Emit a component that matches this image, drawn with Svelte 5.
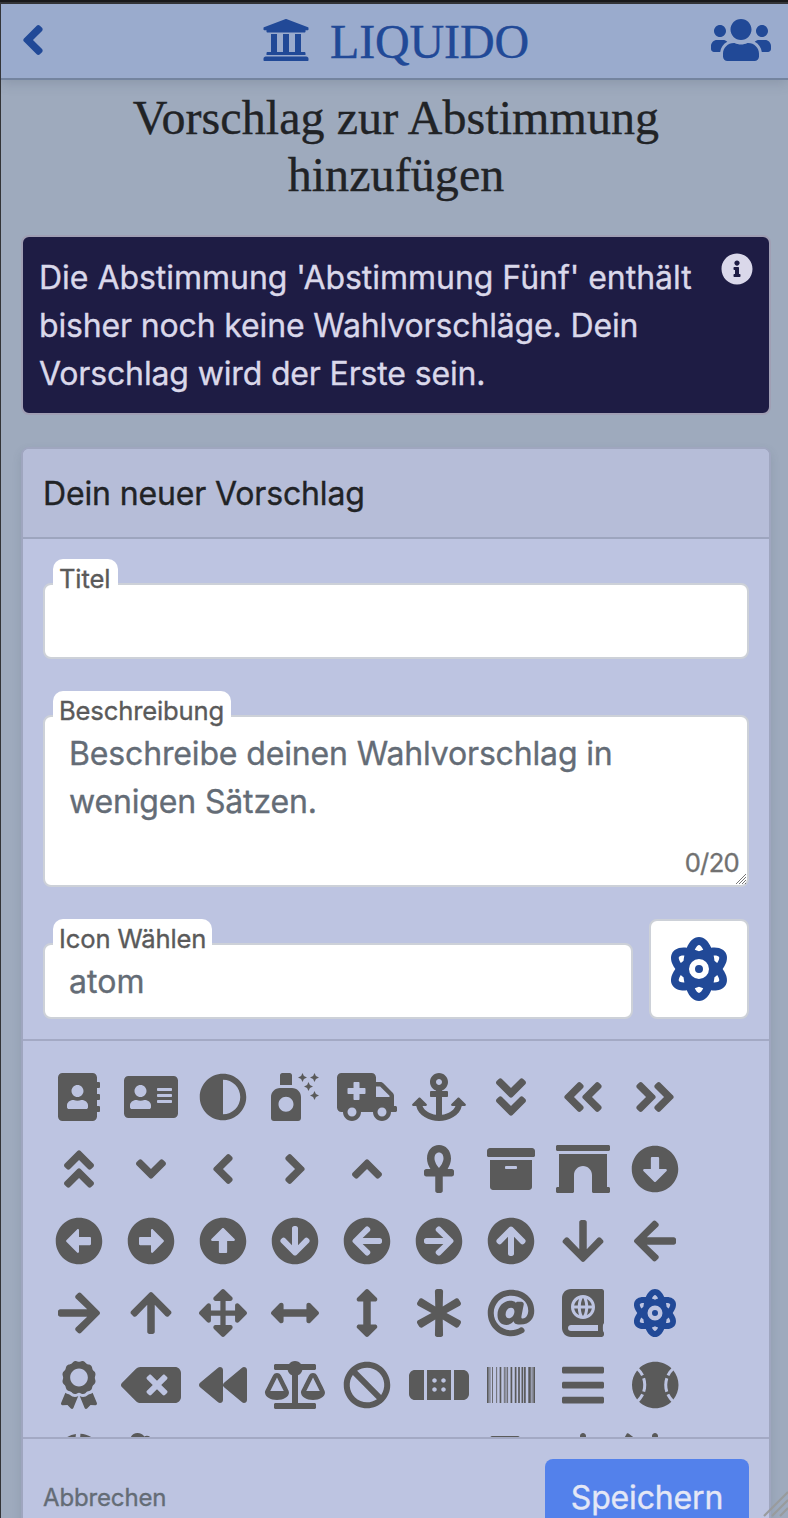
<script>
  const circle = 'M504 256c0 137-111 248-248 248S8 393 8 256 119 8 256 8s248 111 248 248z';
  const angle = 'M143 352.3L7 216.3c-9.4-9.4-9.4-24.6 0-33.9l22.6-22.6c9.4-9.4 24.6-9.4 33.9 0l96.4 96.4 96.4-96.4c9.4-9.4 24.6-9.4 33.9 0l22.6 22.6c9.4 9.4 9.4 24.6 0 33.9l-136 136c-9.2 9.4-24.4 9.4-33.8 0z';
  const doubleAngle =
    angle.replace('M143 352.3L7 216.3', 'M143 256.3L7 120.3') +
    angle.replace('M143 352.3L7 216.3', 'M143 448.3L7 312.3');
  const blockArrow = circle + 'M212 140v116h-70.9c-10.7 0-16.1 13-8.5 20.5l114.9 114.3c4.7 4.7 12.2 4.7 16.9 0l114.9-114.3c7.6-7.6 2.2-20.5-8.5-20.5H300V140c0-6.6-5.4-12-12-12h-64c-6.6 0-12 5.4-12 12z';
  const circleArrow = circle + 'm-143.6-28.9L288 302.6V120c0-13.3-10.7-24-24-24h-16c-13.3 0-24 10.7-24 24v182.6l-72.4-75.5c-9.3-9.7-24.8-9.9-34.3-.4l-10.9 11c-9.4 9.4-9.4 24.6 0 33.9L239 404.3c9.4 9.4 24.6 9.4 33.9 0l132.7-132.7c9.4-9.4 9.4-24.6 0-33.9l-10.9-11c-9.5-9.5-25-9.3-34.3.4z';
  const arrow = 'M413.1 222.5l22.2 22.2c9.4 9.4 9.4 24.6 0 33.9L241 473c-9.4 9.4-24.6 9.4-33.9 0L12.7 278.6c-9.4-9.4-9.4-24.6 0-33.9l22.2-22.2c9.5-9.5 25-9.3 34.3.4L184 343.4V56c0-13.3 10.7-24 24-24h32c13.3 0 24 10.7 24 24v287.4l114.8-120.5c9.3-9.8 24.8-10 34.3-.4z';
  const arrowsH = 'M377.941 169.941V216H134.059v-46.059c0-21.382-25.851-32.09-40.971-16.971L7.029 239.029c-9.373 9.373-9.373 24.568 0 33.941l86.059 86.059c15.119 15.119 40.971 4.411 40.971-16.971V296h243.882v46.059c0 21.382 25.851 32.09 40.971 16.971l86.059-86.059c9.373-9.373 9.373-24.568 0-33.941l-86.059-86.059c-15.119-15.12-40.971-4.412-40.971 16.97z';
  const atom = 'M223.999 224a32 32 0 1 0 32.008 32A32.064 32.064 0 0 0 223.999 224Zm214.172-96c-10.877-19.5-40.51-50.75-116.275-41.875C300.392 34.875 267.634 0 223.999 0s-76.39 34.875-97.896 86.125C50.337 77.375 20.706 108.5 9.829 128-6.55 157.375-5.175 201.125 34.958 256-5.175 310.875-6.55 354.625 9.829 384c29.131 52.375 101.647 43.625 116.274 41.875C147.608 477.125 180.364 512 223.999 512s76.393-34.875 97.897-86.125c14.629 1.75 87.144 10.5 116.275-41.875C454.55 354.625 453.175 310.875 413.04 256 453.175 201.125 454.55 157.375 438.171 128ZM63.339 352c-4-7.25-.125-24.75 15.004-48.25 6.877 6.5 14.129 12.875 21.881 19.125 1.625 13.75 4 27.125 6.75 40.125C82.345 363.875 67.091 358.625 63.339 352Zm36.885-162.875c-7.752 6.25-15.004 12.625-21.881 19.125-15.129-23.5-19.004-41-15.004-48.25 3.377-6.125 16.379-11.5 37.885-11.5 1.75 0 3.875.375 5.75.375C104.099 162.25 101.849 175.625 100.224 189.125ZM223.999 64c9.502 0 22.256 13.5 33.883 37.25-11.252 3.75-22.504 8-33.883 12.875-11.377-4.875-22.629-9.125-33.883-12.875C201.745 77.5 214.497 64 223.999 64Zm0 384c-9.502 0-22.254-13.5-33.883-37.25 11.254-3.75 22.506-8 33.883-12.875C235.378 402.75 246.63 407 257.882 410.75 246.255 434.5 233.501 448 223.999 448Zm0-112a80 80 0 1 1 80-80A80 80 0 0 1 223.999 336ZM384.659 352c-3.625 6.625-19.004 11.875-43.635 11 2.752-13 5.127-26.375 6.752-40.125 7.752-6.25 15.004-12.625 21.879-19.125C384.784 327.25 388.659 344.75 384.659 352ZM369.655 208.25c-6.875-6.5-14.127-12.875-21.879-19.125-1.625-13.5-3.875-26.875-6.752-40.25 1.875 0 4.002-.375 5.752-.375 21.504 0 34.508 5.375 37.883 11.5C388.659 167.25 384.784 184.75 369.655 208.25Z';
  const university = 'M496 128v16a8 8 0 0 1-8 8h-24v12c0 6.627-5.373 12-12 12H60c-6.627 0-12-5.373-12-12v-12H24a8 8 0 0 1-8-8v-16a8 8 0 0 1 4.941-7.392l232-88a7.996 7.996 0 0 1 6.118 0l232 88A8 8 0 0 1 496 128zm-24 304H40c-13.255 0-24 10.745-24 24v16a8 8 0 0 0 8 8h464a8 8 0 0 0 8-8v-16c0-13.255-10.745-24-24-24zM96 192v192H60c-6.627 0-12 5.373-12 12v20h416v-20c0-6.627-5.373-12-12-12h-36V192h-64v192h-64V192h-64v192h-64V192H96z';
  const users = 'M96 224c35.3 0 64-28.7 64-64s-28.7-64-64-64-64 28.7-64 64 28.7 64 64 64zm448 0c35.3 0 64-28.7 64-64s-28.7-64-64-64-64 28.7-64 64 28.7 64 64 64zm32 32h-64c-17.6 0-33.5 7.1-45.1 18.6 40.3 22.1 68.9 62 75.1 109.4h66c17.7 0 32-14.3 32-32v-32c0-35.3-28.7-64-64-64zm-256 0c61.9 0 112-50.1 112-112S381.9 32 320 32 208 82.1 208 144s50.1 112 112 112zm76.8 32h-8.3c-20.8 10-43.9 16-68.5 16s-47.6-6-68.5-16h-8.3C179.6 288 128 339.6 128 403.2V432c0 26.5 21.5 48 48 48h288c26.5 0 48-21.5 48-48v-28.8c0-63.6-51.6-115.2-115.2-115.2zm-223.7-13.4C161.5 263.1 145.6 256 128 256H64c-35.3 0-64 28.7-64 64v32c0 17.7 14.3 32 32 32h65.9c6.3-47.4 34.9-87.3 75.2-109.4z';
  const info = 'M256 8C119.043 8 8 119.083 8 256c0 136.997 111.043 248 248 248s248-111.003 248-248C504 119.083 392.957 8 256 8zm0 110c23.196 0 42 18.804 42 42s-18.804 42-42 42-42-18.804-42-42 18.804-42 42-42zm56 254c0 6.627-5.373 12-12 12h-88c-6.627 0-12-5.373-12-12v-24c0-6.627 5.373-12 12-12h12v-64h-12c-6.627 0-12-5.373-12-12v-24c0-6.627 5.373-12 12-12h64c6.627 0 12 5.373 12 12v100h12c6.627 0 12 5.373 12 12v24z';

  const star = (x, y) => `M${x} ${y - 48}l15 33 33 15-33 15-15 33-15-33-33-15 33-15z`;
  const freshener = 'M96 24c0-13 11-24 24-24h80c13 0 24 11 24 24v104H96zM0 256c0-53 43-96 96-96h128c53 0 96 43 96 96v224c0 18-14 32-32 32H32c-18 0-32-14-32-32zM160 254c-44 0-80 36-80 80s36 80 80 80 80-36 80-80-36-80-80-80z' + star(336, 48) + star(464, 48) + star(400, 144) + star(464, 240);
  const bars = [60, 220, 380].map((y) => `M16 ${y + 72}h416c8.8 0 16-7.2 16-16v-40c0-8.8-7.2-16-16-16H16c-8.8 0-16 7.2-16 16v40c0 8.8 7.2 16 16 16z`).join('');
  const barcode = [[0, 18], [26.9, 9.1], [54, 8.9], [98.9, 8.8], [134.9, 17.7], [179.7, 8.9], [197.7, 8.9], [215.7, 8.9], [251.4, 18], [296.3, 18], [332.3, 18], [368.3, 18], [395.1, 18], [440.3, 26.8], [476.3, 9.1], [494, 18]].map(([x, w]) => `M${x} 64h${w}v384h-${w}z`).join('');
  const dot = (x, y) => `M${x} ${y}c13.3 0 24 10.7 24 24s-10.7 24-24 24-24-10.7-24-24 10.7-24 24-24z`;
  const bell = 'M224 512c35.3 0 64-28.7 64-64H160c0 35.3 28.7 64 64 64zm215.4-149.7c-19.3-20.8-55.5-52-55.5-154.3 0-77.7-54.5-139.9-127.9-155.2V32c0-17.7-14.3-32-32-32s-32 14.3-32 32v20.8C118.6 68.1 64.1 130.3 64.1 208c0 102.3-36.2 133.5-55.5 154.3C-7 379 3 416 32.1 416h383.8c29.1 0 39.1-37 23.5-53.7z';
  const battery = 'M544 160v192H64V160h480m16-64H48c-26.5 0-48 21.5-48 48v224c0 26.5 21.5 48 48 48h512c26.5 0 48-21.5 48-48v-16h8c13.3 0 24-10.7 24-24V184c0-13.3-10.7-24-24-24h-8v-16c0-26.5-21.5-48-48-48z';

  const icons = [
    { n: 'address-book', w: 448, d: 'M436 160c6.6 0 12-5.4 12-12v-40c0-6.6-5.4-12-12-12h-20V48c0-26.5-21.5-48-48-48H48C21.5 0 0 21.5 0 48v416c0 26.5 21.5 48 48 48h320c26.5 0 48-21.5 48-48v-48h20c6.6 0 12-5.4 12-12v-40c0-6.6-5.4-12-12-12h-20v-64h20c6.6 0 12-5.4 12-12v-40c0-6.6-5.4-12-12-12h-20v-64h20zm-228-32c35.3 0 64 28.7 64 64s-28.7 64-64 64-64-28.7-64-64 28.7-64 64-64zm112 236.8c0 10.6-10 19.2-22.4 19.2H118.4C106 384 96 375.4 96 364.8v-19.2c0-31.8 30.1-57.6 67.2-57.6h5c12.3 5.1 25.7 8 39.8 8s27.6-2.9 39.8-8h5c37.1 0 67.2 25.8 67.2 57.6v19.2z' },
    { n: 'address-card', w: 576, d: 'M528 32H48C21.5 32 0 53.5 0 80v352c0 26.5 21.5 48 48 48h480c26.5 0 48-21.5 48-48V80c0-26.5-21.5-48-48-48zm-352 96c35.3 0 64 28.7 64 64s-28.7 64-64 64-64-28.7-64-64 28.7-64 64-64zm112 236.8c0 10.6-10 19.2-22.4 19.2H86.4C74 384 64 375.4 64 364.8v-19.2c0-31.8 30.1-57.6 67.2-57.6h5c12.3 5.1 25.7 8 39.8 8s27.6-2.9 39.8-8h5c37.1 0 67.2 25.8 67.2 57.6v19.2zM512 312c0 4.4-3.6 8-8 8H360c-4.4 0-8-3.6-8-8v-16c0-4.4 3.6-8 8-8h144c4.4 0 8 3.6 8 8v16zm0-64c0 4.4-3.6 8-8 8H360c-4.4 0-8-3.6-8-8v-16c0-4.4 3.6-8 8-8h144c4.4 0 8 3.6 8 8v16zm0-64c0 4.4-3.6 8-8 8H360c-4.4 0-8-3.6-8-8v-16c0-4.4 3.6-8 8-8h144c4.4 0 8 3.6 8 8v16z' },
    { n: 'adjust', w: 512, d: 'M8 256c0 136.966 111.033 248 248 248s248-111.034 248-248S392.966 8 256 8 8 119.033 8 256zm248 184V72c101.705 0 184 82.311 184 184 0 101.705-82.311 184-184 184z' },
    { n: 'air-freshener', w: 512, d: freshener },
    { n: 'ambulance', w: 640, d: 'M624 352h-16V243.9c0-12.7-5.1-24.9-14.1-33.9L494 110.1c-9-9-21.2-14.1-33.9-14.1H416V48c0-26.5-21.5-48-48-48H48C21.5 0 0 21.5 0 48v320c0 26.5 21.5 48 48 48h16c0 53 43 96 96 96s96-43 96-96h128c0 53 43 96 96 96s96-43 96-96h48c8.8 0 16-7.2 16-16v-32c0-8.8-7.2-16-16-16zM160 464c-26.5 0-48-21.5-48-48s21.5-48 48-48 48 21.5 48 48-21.5 48-48 48zm144-248c0 4.4-3.6 8-8 8h-56v56c0 4.4-3.6 8-8 8h-48c-4.4 0-8-3.6-8-8v-56h-56c-4.4 0-8-3.6-8-8v-48c0-4.4 3.6-8 8-8h56v-56c0-4.4 3.6-8 8-8h48c4.4 0 8 3.6 8 8v56h56c4.4 0 8 3.6 8 8v48zm176 248c-26.5 0-48-21.5-48-48s21.5-48 48-48 48 21.5 48 48-21.5 48-48 48zm80-208H416V144h44.1l99.9 99.9V256z' },
    { n: 'anchor', w: 576, d: 'M12.971 352h32.394C67.172 454.735 181.944 512 288 512c106.229 0 220.853-57.38 242.635-160h32.394c10.691 0 16.045-12.926 8.485-20.485l-67.029-67.029c-4.686-4.686-12.284-4.686-16.971 0l-67.029 67.029c-7.56 7.56-2.206 20.485 8.485 20.485h35.146c-20.29 54.317-84.963 86.588-144.117 94.015V256h52c6.627 0 12-5.373 12-12v-40c0-6.627-5.373-12-12-12h-52v-5.5c37.3-13.2 64-48.9 64-90.5 0-53-43-96-96-96s-96 43-96 96c0 41.8 26.7 77.4 64 90.5V192h-52c-6.6 0-12 5.4-12 12v40c0 6.6 5.4 12 12 12h52v190.015c-58.936-7.399-123.82-39.679-144.117-94.015h35.146c10.691 0 16.045-12.926 8.485-20.485l-67.029-67.029c-4.686-4.686-12.284-4.686-16.971 0L4.485 331.515C-3.074 339.074 2.28 352 12.971 352zM288 64c17.6 0 32 14.4 32 32s-14.4 32-32 32-32-14.4-32-32 14.4-32 32-32z' },
    { n: 'angle-double-down', w: 320, d: doubleAngle },
    { n: 'angle-double-left', w: 320, d: doubleAngle, r: 90 },
    { n: 'angle-double-right', w: 320, d: doubleAngle, r: -90 },
    { n: 'angle-double-up', w: 320, d: doubleAngle, r: 180 },
    { n: 'angle-down', w: 320, d: angle },
    { n: 'angle-left', w: 320, d: angle, r: 90 },
    { n: 'angle-right', w: 320, d: angle, r: -90 },
    { n: 'angle-up', w: 320, d: angle, r: 180 },
    { n: 'ankh', w: 320, d: 'M296 256h-44.62C272.46 222.55 288 181.65 288 144 288 55.63 230.69 0 160 0S32 55.63 32 144c0 37.65 15.54 78.55 36.62 112H24c-13.25 0-24 10.74-24 24v32c0 13.25 10.75 24 24 24h96v152c0 13.25 10.75 24 24 24h32c13.25 0 24-10.75 24-24V336h96c13.25 0 24-10.75 24-24v-32c0-13.26-10.75-24-24-24zM160 80c29.61 0 48 24.52 48 64 0 34.66-27.14 78.14-48 100.87-20.86-22.72-48-66.21-48-100.87 0-39.48 18.39-64 48-64z' },
    { n: 'archive', w: 512, d: 'M32 448c0 17.7 14.3 32 32 32h384c17.7 0 32-14.3 32-32V160H32v288zm160-212c0-6.6 5.4-12 12-12h104c6.6 0 12 5.4 12 12v8c0 6.6-5.4 12-12 12H204c-6.6 0-12-5.4-12-12v-8zM480 32H32C14.3 32 0 46.3 0 64v48c0 8.8 7.2 16 16 16h480c8.8 0 16-7.2 16-16V64c0-17.7-14.3-32-32-32z' },
    { n: 'archway', w: 576, d: 'M560 448h-16V96H32v352H16.02c-8.84 0-16 7.16-16 16v32c0 8.84 7.16 16 16 16H176c8.84 0 16-7.16 16-16V320c0-53.02 42.98-96 96-96s96 42.98 96 96l.02 160v16c0 8.84 7.16 16 16 16H560c8.84 0 16-7.16 16-16v-32c0-8.84-7.16-16-16-16zm0-448H16C7.16 0 0 7.16 0 16v32c0 8.84 7.16 16 16 16h544c8.84 0 16-7.16 16-16V16c0-8.84-7.16-16-16-16z' },
    { n: 'arrow-alt-circle-down', w: 512, d: blockArrow },
    { n: 'arrow-alt-circle-left', w: 512, d: blockArrow, r: 90 },
    { n: 'arrow-alt-circle-right', w: 512, d: blockArrow, r: -90 },
    { n: 'arrow-alt-circle-up', w: 512, d: blockArrow, r: 180 },
    { n: 'arrow-circle-down', w: 512, d: circleArrow },
    { n: 'arrow-circle-left', w: 512, d: circleArrow, r: 90 },
    { n: 'arrow-circle-right', w: 512, d: circleArrow, r: -90 },
    { n: 'arrow-circle-up', w: 512, d: circleArrow, r: 180 },
    { n: 'arrow-down', w: 448, d: arrow },
    { n: 'arrow-left', w: 448, d: arrow, r: 90 },
    { n: 'arrow-right', w: 448, d: arrow, r: -90 },
    { n: 'arrow-up', w: 448, d: arrow, r: 180 },
    { n: 'arrows-alt', w: 512, d: 'M352.201 425.775l-79.196 79.196c-9.373 9.373-24.568 9.373-33.941 0l-79.196-79.196c-15.119-15.119-4.411-40.971 16.971-40.97h51.162L228 284H127.196v51.162c0 21.382-25.851 32.09-40.971 16.971L7.029 272.937c-9.373-9.373-9.373-24.569 0-33.941L86.225 159.8c15.119-15.119 40.971-4.411 40.971 16.971V228H228V127.196h-51.23c-21.382 0-32.09-25.851-16.971-40.971l79.196-79.196c9.373-9.373 24.568-9.373 33.941 0l79.196 79.196c15.119 15.119 4.411 40.971-16.971 40.971h-51.162V228h100.804v-51.162c0-21.382 25.851-32.09 40.97-16.971l79.196 79.196c9.373 9.373 9.373 24.569 0 33.941L425.773 352.2c-15.119 15.119-40.971 4.411-40.97-16.971V284H284v100.804h51.23c21.382 0 32.09 25.851 16.971 40.971z' },
    { n: 'arrows-alt-h', w: 512, d: arrowsH },
    { n: 'arrows-alt-v', w: 512, d: arrowsH, r: 90 },
    { n: 'asterisk', w: 512, d: 'M478.21 334.093L336 256l142.21-78.093c11.795-6.477 15.961-21.384 9.232-33.037l-19.48-33.741c-6.728-11.653-21.72-15.499-33.227-8.523L296 186.718l3.475-162.204C299.763 11.061 288.937 0 275.48 0h-38.96c-13.456 0-24.283 11.061-23.994 24.514L216 186.718 77.265 102.607c-11.506-6.976-26.499-3.13-33.227 8.523l-19.48 33.741c-6.728 11.653-2.562 26.56 9.233 33.037L176 256 33.79 334.093c-11.795 6.477-15.961 21.384-9.232 33.037l19.48 33.741c6.728 11.653 21.721 15.499 33.227 8.523L216 325.282l-3.475 162.204C212.237 500.939 223.064 512 236.52 512h38.961c13.456 0 24.283-11.061 23.995-24.514L296 325.282l138.735 84.111c11.506 6.976 26.499 3.13 33.227-8.523l19.48-33.741c6.728-11.653 2.563-26.559-9.232-33.036z' },
    { n: 'at', w: 512, d: 'M256 8C118.941 8 8 118.919 8 256c0 137.059 110.919 248 248 248 48.154 0 95.342-14.14 135.408-40.223 12.005-7.815 14.625-24.288 5.552-35.372l-10.177-12.433c-7.671-9.371-21.179-11.667-31.373-5.129C325.92 429.757 291.314 440 256 440c-101.458 0-184-82.542-184-184S154.542 72 256 72c100.139 0 184 57.619 184 160 0 38.786-21.093 79.742-58.17 83.693-17.349-.454-16.91-12.857-13.476-30.024l23.433-121.11C394.653 149.75 383.308 136 368.225 136h-44.981a13.518 13.518 0 0 0-13.432 11.993l-.01.092c-14.697-17.901-40.448-21.775-59.971-21.775-74.58 0-137.831 62.234-137.831 151.46 0 65.303 36.785 105.87 96 105.87 26.984 0 57.369-15.637 74.991-38.333 9.522 34.104 40.613 34.103 70.71 34.103C462.609 379.41 504 307.798 504 232 504 95.653 394.023 8 256 8zm-21.68 304.43c-22.249 0-36.07-15.623-36.07-40.771 0-44.993 30.779-72.729 58.63-72.729 22.292 0 35.601 15.241 35.601 40.77 0 45.061-33.875 72.73-58.161 72.73z' },
    { n: 'atlas', w: 448, d: 'M318.38 208h-39.09c-1.49 27.03-6.54 51.35-14.21 70.41 27.71-13.24 48.02-39.19 53.3-70.41zm0-32c-5.29-31.22-25.59-57.17-53.3-70.41 7.68 19.06 12.72 43.38 14.21 70.41h39.09zM224 97.31c-7.69 7.45-20.77 34.42-23.43 78.69h46.87c-2.67-44.26-15.75-71.24-23.44-78.69zm-41.08 8.28c-27.71 13.24-48.02 39.19-53.3 70.41h39.09c1.49-27.03 6.53-51.35 14.21-70.41zm0 172.82c-7.68-19.06-12.72-43.38-14.21-70.41h-39.09c5.28 31.22 25.59 57.17 53.3 70.41zM247.43 208h-46.87c2.66 44.26 15.74 71.24 23.43 78.69 7.7-7.45 20.78-34.43 23.44-78.69zM448 358.4V25.6c0-16-9.6-25.6-25.6-25.6H96C41.6 0 0 41.6 0 96v320c0 54.4 41.6 96 96 96h326.4c12.8 0 25.6-9.6 25.6-25.6v-16c0-6.4-3.2-12.8-9.6-19.2-3.2-16-3.2-60.8 0-73.6 6.4-3.2 9.6-9.6 9.6-19.2zM224 64c70.69 0 128 57.31 128 128s-57.31 128-128 128S96 262.69 96 192 153.31 64 224 64zm160 384H96c-19.2 0-32-12.8-32-32s16-32 32-32h288v64z' },
    { n: 'atom', w: 448, d: atom },
    { n: 'award', w: 384, d: 'M97.12 362.63c-8.69-8.69-4.16-6.24-25.12-11.85-9.51-2.55-17.87-7.45-25.43-13.32L1.2 448.7c-4.39 10.77 3.81 22.47 15.43 22.03l52.69-2.01L105.56 507c8 8.44 22.04 5.81 26.43-4.96l52.05-127.62c-10.84 6.04-22.87 9.58-35.31 9.58-19.5 0-37.82-7.59-51.61-21.37zM382.8 448.7l-45.37-111.24c-7.56 5.88-15.92 10.77-25.43 13.32-21.07 5.64-16.45 3.18-25.12 11.85-13.79 13.78-32.12 21.37-51.62 21.37-12.44 0-24.47-3.55-35.31-9.58L252 502.04c4.39 10.77 18.44 13.4 26.43 4.96l36.25-38.28 52.69 2.01c11.62.44 19.82-11.27 15.43-22.03zM263 340c15.28-15.55 17.03-14.21 38.79-20.14 13.89-3.79 24.75-14.84 28.47-28.98 7.48-28.4 5.54-24.97 25.95-45.75 10.17-10.35 14.14-25.44 10.42-39.58-7.47-28.38-7.48-24.42 0-52.83 3.72-14.14-.25-29.23-10.42-39.58-20.41-20.78-18.47-17.36-25.95-45.75-3.72-14.14-14.58-25.19-28.47-28.98-27.88-7.61-24.52-5.62-44.95-26.41-10.17-10.35-25-14.4-38.89-10.61-27.87 7.6-23.98 7.61-51.9 0-13.89-3.79-28.72.25-38.89 10.61-20.41 20.78-17.05 18.8-44.94 26.41-13.89 3.79-24.75 14.84-28.47 28.98-7.47 28.39-5.54 24.97-25.95 45.75-10.17 10.35-14.15 25.44-10.42 39.58 7.47 28.36 7.48 24.4 0 52.82-3.72 14.14.25 29.23 10.42 39.59 20.41 20.78 18.47 17.35 25.95 45.75 3.72 14.14 14.58 25.19 28.47 28.98C104.6 325.96 106.27 325 121 340c13.23 13.47 33.84 15.88 49.74 5.82a39.676 39.676 0 0 1 42.53 0c15.89 10.06 36.5 7.65 49.73-5.82zM97.66 175.96c0-53.03 42.24-96.02 94.34-96.02s94.34 42.99 94.34 96.02-42.24 96.02-94.34 96.02-94.34-42.99-94.34-96.02z' },
    { n: 'backspace', w: 640, d: 'M576 64H205.26A63.97 63.97 0 0 0 160 82.75L9.37 233.37c-12.5 12.5-12.5 32.76 0 45.25L160 429.25c12 12 28.28 18.75 45.25 18.75H576c35.35 0 64-28.65 64-64V128c0-35.35-28.65-64-64-64zm-84.69 254.06c6.25 6.25 6.25 16.38 0 22.63l-22.62 22.62c-6.25 6.25-16.38 6.25-22.63 0L384 301.25l-62.06 62.06c-6.25 6.25-16.38 6.25-22.63 0l-22.62-22.62c-6.25-6.25-6.25-16.38 0-22.63L338.75 256l-62.06-62.06c-6.25-6.25-6.25-16.38 0-22.63l22.62-22.62c6.25-6.25 16.38-6.25 22.63 0L384 210.75l62.06-62.06c6.25-6.25 16.38-6.25 22.63 0l22.62 22.62c6.25 6.25 6.25 16.38 0 22.63L429.25 256l62.06 62.06z' },
    { n: 'backward', w: 512, d: 'M11.5 280.6l192 160c20.6 17.2 52.5 2.8 52.5-24.6V96c0-27.4-31.9-41.8-52.5-24.6l-192 160c-15.3 12.8-15.3 36.4 0 49.2zm256 0l192 160c20.6 17.2 52.5 2.8 52.5-24.6V96c0-27.4-31.9-41.8-52.5-24.6l-192 160c-15.3 12.8-15.3 36.4 0 49.2z' },
    { n: 'balance-scale', w: 640, d: 'M256 336h-.02c0-16.18 1.34-8.73-85.05-181.51-17.65-35.29-68.19-35.36-85.87 0C-2.06 328.75.02 320.33.02 336H0c0 44.18 57.31 80 128 80s128-35.82 128-80zM128 176l72 144H56l72-144zm511.98 160c0-16.18 1.34-8.73-85.05-181.51-17.65-35.29-68.19-35.36-85.87 0-87.12 174.26-85.04 165.84-85.04 181.51H384c0 44.18 57.31 80 128 80s128-35.82 128-80h-.02zM440 320l72-144 72 144H440zm88 128H352V153.25c23.51-10.29 41.16-31.48 46.39-57.25H528c8.84 0 16-7.16 16-16V48c0-8.84-7.16-16-16-16H383.64C369.04 12.68 346.09 0 320 0s-49.04 12.68-63.64 32H112c-8.84 0-16 7.16-16 16v32c0 8.84 7.16 16 16 16h129.61c5.23 25.76 22.87 46.96 46.39 57.25V448H112c-8.84 0-16 7.16-16 16v32c0 8.84 7.16 16 16 16h416c8.84 0 16-7.16 16-16v-32c0-8.84-7.16-16-16-16z' },
    { n: 'ban', w: 512, d: 'M256 8C119.034 8 8 119.033 8 256s111.034 248 248 248 248-111.034 248-248S392.967 8 256 8zm130.108 117.892c65.448 65.448 70 165.481 20.677 235.637L150.47 105.216c70.204-49.356 170.226-44.735 235.638 20.676zM125.892 386.108c-65.448-65.448-70-165.481-20.677-235.637L361.53 406.784c-70.203 49.356-170.226 44.736-235.638-20.676z' },
    { n: 'band-aid', w: 640, d: 'M0 160v192c0 35.3 28.7 64 64 64h96V96H64c-35.3 0-64 28.7-64 64zm576-64h-96v320h96c35.3 0 64-28.7 64-64V160c0-35.3-28.7-64-64-64zM192 416h256V96H192v320z' + dot(272, 184) + dot(368, 184) + dot(272, 280) + dot(368, 280) },
    { n: 'barcode', w: 512, d: barcode },
    { n: 'bars', w: 448, d: bars },
    { n: 'baseball-ball', w: 496, d: 'M368.5 363.9l28.8-13.9c11.1 22.9 26 43.2 44.1 60.9 34-42.5 54.5-96.3 54.5-154.9 0-58.5-20.4-112.2-54.2-154.6-17.8 17.3-32.6 37.1-43.6 59.5l-28.7-14.1c12.8-26 30-49 50.8-69C375.6 34.7 315 8 248 8 181.1 8 120.5 34.6 75.9 77.7c20.7 19.9 37.9 42.9 50.7 68.8l-28.7 14.1c-11-22.3-25.7-42.1-43.5-59.4C20.4 143.7 0 197.4 0 256c0 58.6 20.4 112.3 54.4 154.7 18.2-17.7 33.2-38 44.3-61l28.8 13.9c-12.9 26.7-30.3 50.3-51.5 70.7 44.5 43.1 105.1 69.7 172 69.7 66.8 0 127.3-26.5 171.9-69.5-21.1-20.4-38.5-43.9-51.4-70.6zm-228.3-32l-30.5-9.8c14.9-46.4 12.7-93.8-.6-134l30.4-10c15 45.6 18 99.9.7 153.8zm216.3-153.4l30.4 10c-13.2 40.1-15.5 87.5-.6 134l-30.5 9.8c-17.3-54-14.3-108.3.7-153.8z' },
    { n: 'basketball-ball', w: 496, d: 'M212.3 10.3c-43.8 6.3-86.2 24.1-122.2 53.4l77.4 77.4c27.8-35.8 43.3-81.2 44.8-130.8zM248 222L405.9 64.1c-42.4-35-93.6-53.5-145.5-56.1-1.2 63.9-21.5 122.3-58.7 167.7z' },
    { n: 'bath', w: 512, d: 'M32 256V80C32 36 68 0 112 0c32 0 58 16 72 36 22-10 50-8 70 12l-86 86c-20-22-22-30-56-30-18 0-32 8-32 24v128h400v64H16v-64z' },
    { n: 'battery-empty', w: 640, d: battery },
    { n: 'battery-full', w: 640, d: battery },
    { n: 'battery-half', w: 640, d: battery },
    { n: 'bed', w: 640, d: 'M176 256c44 0 80-36 80-80s-36-80-80-80-80 36-80 80 36 80 80 80zm352-128H304v160H64V96H0v352h64v-64h512v64h64V240c0-62-50-112-112-112z' },
    { n: 'beer', w: 448, d: 'M368 96h-48V56c0-13.3-10.7-24-24-24H24C10.7 32 0 42.7 0 56v400c0 13.3 10.7 24 24 24h272c13.3 0 24-10.7 24-24v-42.1l80.6-36c28.9-12.9 47.4-41.5 47.4-73V176c0-44-36-80-80-80z' },
    { n: 'bell', w: 448, d: bell },
    { n: 'bell-slash', w: 640, d: 'M634 471L45 10C38 2 28 0 20 4L3 35c-5 7-4 17 3 22l589 464c7 5 17 4 22-3l20-25c5-7 4-17-3-22zM320 0c-17.7 0-32 14.3-32 32v20.8c-30 6-57 20-78 40l274 212c-2-25-4-55-4-97 0-77.7-54.5-139.9-128-155.2V32c0-17.7-14.3-32-32-32z' }
  ];
</script>

{#snippet glyph(d, w, h, r = 0)}
  <svg width={(w * h) / 512} height={h} viewBox="0 0 {w} 512" aria-hidden="true">
    <path {d} fill="currentColor" fill-rule="evenodd" transform={r ? `rotate(${r} ${w / 2} 256)` : undefined} />
  </svg>
{/snippet}

<div class="page">
  <header class="bar">
    <button class="nav" aria-label="Zurück">{@render glyph(angle, 320, 48, 90)}</button>
    <div class="brand">
      {@render glyph(university, 512, 48)}
      <span>LIQUIDO</span>
    </div>
    <button class="nav" aria-label="Team">{@render glyph(users, 640, 48)}</button>
  </header>

  <main>
    <h1>Vorschlag zur Abstimmung<br />hinzufügen</h1>

    <div class="alert">
      <p><span class="first">Die Abstimmung 'Abstimmung Fünf' enthält</span><br />bisher noch keine Wahlvorschläge. Dein<br />Vorschlag wird der Erste sein.</p>
      {@render glyph(info, 512, 32)}
    </div>

    <section class="card">
      <h2>Dein neuer Vorschlag</h2>
      <div class="form">
        <div class="field">
          <span class="label l1">Titel</span>
          <div class="input"></div>
        </div>
        <div class="field">
          <span class="label l2">Beschreibung</span>
          <div class="input area">
            <p>Beschreibe deinen Wahlvorschlag in<br />wenigen Sätzen.</p>
            <span class="count">0/20</span>
            <svg class="grip" width="12" height="12" viewBox="0 0 12 12"><path d="M1 11L11 1M4 11L11 4M7 11L11 7M10 11L11 10" stroke="#777" stroke-width="1" /></svg>
          </div>
        </div>
        <div class="row">
          <div class="field">
            <span class="label l3">Icon Wählen</span>
            <div class="input value"><p>atom</p></div>
          </div>
          <div class="preview">{@render glyph(atom, 448, 64)}</div>
        </div>
      </div>
      <div class="icons">
        {#each icons as icon (icon.n)}
          <div class="cell" class:selected={icon.n === 'atom'}>{@render glyph(icon.d, icon.w, 48, icon.r)}</div>
        {/each}
      </div>
      <footer>
        <span class="cancel">Abbrechen</span>
        <button class="save"><span>Speichern</span></button>
      </footer>
    </section>
  </main>
  <svg class="corner" width="24" height="26" viewBox="0 0 24 26"><path d="M0 24L24 0M8 24L24 8M16 24L24 16" stroke="#999b9d" stroke-width="2.2" /></svg>
</div>

<style>
  :global(body) { margin: 0; overflow: hidden; }
  * { box-sizing: border-box; }
  svg { display: block; flex: none; overflow: visible; }
  p, h1, h2 { margin: 0; font-weight: 400; }
  button { border: 0; padding: 0; background: none; font: inherit; color: inherit; letter-spacing: inherit; }
  .page {
    position: relative;
    width: 788px;
    height: 1518px;
    overflow: hidden;
    border-top: 2px solid #19191b;
    background: #9eaabd;
    font-family: Inter, sans-serif;
    font-size: 32px;
    line-height: 48px;
    letter-spacing: -.15px;
    -webkit-text-stroke: .35px currentColor;
    color: #212326;
    box-shadow: inset 1px 0 #333437;
    white-space: nowrap;
  }
  .bar {
    display: grid;
    grid-template-columns: 100px 1fr 100px;
    align-items: center;
    height: 78px;
    margin-left: 1px;
    padding: 0 17px 2px 17px;
    border-top: 2px solid #333437;
    border-bottom: 2px solid #74849f;
    background: #9aabcd;
    color: #214997;
    box-shadow: 0 3px 12px rgba(60, 70, 90, .2);
  }
  .nav { display: flex; }
  .nav:last-child { justify-content: flex-end; }
  .brand {
    display: flex;
    align-items: center;
    justify-content: center;
    gap: 20px;
    font: 48px/56px "Liberation Serif", serif;
  }
  .brand span { letter-spacing: -.15px; margin: 3px -2px 0 0; }
  main { padding: 9px 17px 0 21px; }
  h1 {
    width: 750px;
    height: 146px;
    font: 48px/57px "Liberation Serif", serif;
    letter-spacing: .08px;
    text-align: center;
  }
  .alert {
    display: flex;
    justify-content: space-between;
    width: 750px;
    height: 180px;
    padding: 17px 16px 0 16px;
    border: 2px solid #a09fb4;
    border-radius: 8px;
    background: #1e1c44;
    color: #dad8ea;
  }
  .alert svg { margin-top: -1px; }
  .first { letter-spacing: -.03px; }
  .card {
    width: 750px;
    margin-top: 32px;
    border: 2px solid #9fa6bf;
    border-radius: 8px 8px 0 0;
    background: #bdc4e1;
    box-shadow: 0 4px 10px rgba(60, 70, 90, .14);
  }
  h2 {
    height: 90px;
    padding: 21px 20px 0;
    border-bottom: 2px solid #9da5be;
    border-radius: 6px 6px 0 0;
    background: #b6bdd8;
    font-size: 32px;
  }
  .form {
    display: flex;
    flex-direction: column;
    gap: 32px;
    height: 502px;
    padding: 20px 20px 0;
    border-bottom: 2px solid #a3a9c4;
  }
  .field { display: flex; flex-direction: column; align-items: flex-start; flex: none; }
  .label {
    z-index: 1;
    height: 40px;
    margin: 0 0 -16px 10px;
    padding: 0 6px;
    border-radius: 10px 10px 0 0;
    background: #fff;
    color: #5a5a5a;
    font-size: 25.6px;
    line-height: 40px;
  }
  .l1 { width: 65px; }
  .l2 { width: 178px; }
  .l3 { width: 159px; }
  .input {
    position: relative;
    width: 100%;
    height: 76px;
    padding: 12px 24px;
    border: 2px solid #cdd1d8;
    border-radius: 8px;
    background: #fff;
    color: #646c76;
  }
  .value { padding-top: 13px; letter-spacing: .1px; }
  .area { height: 172px; padding-top: 13px; }
  .count { position: absolute; right: 8px; bottom: -2px; color: #717171; font-size: 25.6px; letter-spacing: -.7px; }
  .grip { position: absolute; right: 0; bottom: 0; }
  .row { display: flex; justify-content: space-between; align-items: flex-end; }
  .row .field { width: 590px; }
  .preview {
    display: flex;
    align-items: center;
    justify-content: center;
    width: 100px;
    height: 100px;
    border: 2px solid #cdd1d8;
    border-radius: 8px;
    background: #fff;
    color: #214997;
  }
  .icons {
    display: grid;
    grid-template-columns: repeat(9, 72px);
    grid-auto-rows: 72px;
    height: 398px;
    padding: 20px 20px 0;
    overflow: hidden;
    border-bottom: 2px solid #a3a9c4;
    color: #5a5a5a;
  }
  .cell { display: flex; align-items: center; justify-content: center; }
  .selected { color: #214997; }
  footer {
    display: flex;
    align-items: center;
    justify-content: space-between;
    height: 118px;
    padding: 0 20px;
  }
  .cancel { color: #646c76; font-size: 24px; }
  .save {
    width: 204px;
    height: 78px;
    border-radius: 8px;
    background: #5381eb;
    color: #e4e7f6;
  }
  .corner { position: absolute; right: 0; bottom: 0; }
</style>
